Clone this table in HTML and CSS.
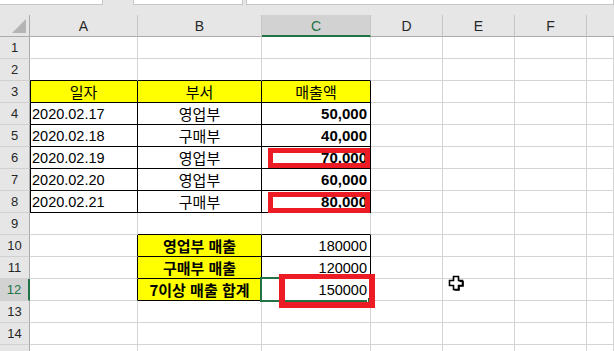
FILE: index.html
```html
<!DOCTYPE html>
<html lang="ko">
<head>
<meta charset="utf-8">
<title>Excel</title>
<link rel="stylesheet" href="styles.css">
</head>
<body>
<div class="topbar">
  <div class="box box1"></div>
  <div class="box box2"></div>
  <div class="box box3"></div>
</div>
<div class="sheet">
  <div class="corner"><span class="tri"></span></div>
  <div class="ch">A</div><div class="ch">B</div><div class="ch sel">C</div><div class="ch">D</div><div class="ch">E</div><div class="ch">F</div><div class="ch last"></div>

  <div class="c rh">1</div><div class="c"></div><div class="c"></div><div class="c"></div><div class="c"></div><div class="c"></div><div class="c"></div><div class="c"></div>
  <div class="c rh">2</div><div class="c bb"></div><div class="c bb"></div><div class="c bb"></div><div class="c"></div><div class="c"></div><div class="c"></div><div class="c"></div>

  <div class="c rh">3</div><div class="c k y bl ctr ko">일자</div><div class="c k y ctr ko">부서</div><div class="c k y ctr ko">매출액</div><div class="c"></div><div class="c"></div><div class="c"></div><div class="c"></div>
  <div class="c rh">4</div><div class="c k bl num">2020.02.17</div><div class="c k ctr ko">영업부</div><div class="c k r num b">50,000</div><div class="c"></div><div class="c"></div><div class="c"></div><div class="c"></div>
  <div class="c rh">5</div><div class="c k bl num">2020.02.18</div><div class="c k ctr ko">구매부</div><div class="c k r num b">40,000</div><div class="c"></div><div class="c"></div><div class="c"></div><div class="c"></div>
  <div class="c rh">6</div><div class="c k bl num">2020.02.19</div><div class="c k ctr ko">영업부</div><div class="c k r num b">70,000</div><div class="c"></div><div class="c"></div><div class="c"></div><div class="c"></div>
  <div class="c rh">7</div><div class="c k bl num">2020.02.20</div><div class="c k ctr ko">영업부</div><div class="c k r num b">60,000</div><div class="c"></div><div class="c"></div><div class="c"></div><div class="c"></div>
  <div class="c rh">8</div><div class="c k bl num">2020.02.21</div><div class="c k ctr ko">구매부</div><div class="c k r num b">80,000</div><div class="c"></div><div class="c"></div><div class="c"></div><div class="c"></div>

  <div class="c rh">9</div><div class="c"></div><div class="c bb"></div><div class="c bb"></div><div class="c"></div><div class="c"></div><div class="c"></div><div class="c"></div>
  <div class="c rh">10</div><div class="c br"></div><div class="c k y ctr ko b">영업부 매출</div><div class="c k r num">180000</div><div class="c"></div><div class="c"></div><div class="c"></div><div class="c"></div>
  <div class="c rh">11</div><div class="c br"></div><div class="c k y ctr ko b">구매부 매출</div><div class="c k r num">120000</div><div class="c"></div><div class="c"></div><div class="c"></div><div class="c"></div>
  <div class="c rh rsel">12</div><div class="c br"></div><div class="c k y ctr ko b">7이상 매출 합계</div><div class="c k r num">150000</div><div class="c"></div><div class="c"></div><div class="c"></div><div class="c"></div>

  <div class="c rh">13</div><div class="c"></div><div class="c"></div><div class="c"></div><div class="c"></div><div class="c"></div><div class="c"></div><div class="c"></div>
  <div class="c rh">14</div><div class="c"></div><div class="c"></div><div class="c"></div><div class="c"></div><div class="c"></div><div class="c"></div><div class="c"></div>
  <div class="c rh"></div><div class="c"></div><div class="c"></div><div class="c"></div><div class="c"></div><div class="c"></div><div class="c"></div><div class="c"></div>
</div>

<div class="selection"><span class="handle"></span></div>
<div class="mark mark6"></div>
<div class="mark mark8"></div>
<div class="mark mark12"></div>

<svg class="cursor" width="16" height="16" viewBox="0 0 16 16">
  <polygon points="5.5,1.5 10.5,1.5 10.5,5.5 14.5,5.5 14.5,10.5 10.5,10.5 10.5,14.5 5.5,14.5 5.5,10.5 1.5,10.5 1.5,5.5 5.5,5.5" fill="#fff" stroke="#000" stroke-width="1.6"/>
  <polyline points="11.5,6.5 15.2,6.5 15.2,11.2 11.2,11.2 11.2,15.2 6.5,15.2" fill="none" stroke="#000" stroke-width="1.2"/>
</svg>
</body>
</html>
```

FILE: styles.css
```css
html, body {
  margin: 0;
  padding: 0;
  background: #fff;
  overflow: hidden;
  width: 614px;
  height: 351px;
}

body {
  position: relative;
  font-family: "Liberation Sans", "Noto Sans CJK KR", sans-serif;
  color: #000;
}

.topbar {
  height: 15px;
  background: #e6e6e6;
  display: flex;
  align-items: flex-start;
}

.box {
  background: #fff;
  border: 1px solid #c6c6c6;
  border-top: none;
  box-sizing: border-box;
  height: 5px;
}

.box1 { width: 103px; border-left: none; }
.box2 { width: 110px; margin-left: 30px; }
.box3 { flex: 1; margin-left: 3px; }

.sheet {
  display: grid;
  grid-template-columns: 30px 108px 124px 109px 72px 72px 72px 1fr;
  grid-template-rows: 22px;
  grid-auto-rows: 22px;
}

.corner {
  background: #e6e6e6;
  border-right: 1px solid #ababab;
  border-bottom: 1px solid #ababab;
  box-sizing: border-box;
  position: relative;
}

.tri {
  position: absolute;
  right: 3px;
  bottom: 3px;
  width: 0;
  height: 0;
  border-left: 14px solid transparent;
  border-bottom: 14px solid #b4b4b4;
}

.ch {
  background: #e6e6e6;
  border-bottom: 1px solid #ababab;
  border-right: 1px solid #c6c6c6;
  box-sizing: border-box;
  display: flex;
  align-items: center;
  justify-content: center;
  font-size: 14px;
  color: #262626;
}

.ch.last { border-right: none; }

.ch.sel {
  background: #d2d2d2;
  border-bottom: 2px solid #217346;
  color: #217346;
  padding-top: 1px;
}

.c {
  box-sizing: border-box;
  border-right: 1px solid #d4d4d4;
  border-bottom: 1px solid #d4d4d4;
  display: flex;
  align-items: center;
  overflow: hidden;
  white-space: nowrap;
  font-size: 14.5px;
}

.rh {
  background: #e6e6e6;
  border-right: 1px solid #ababab;
  border-bottom: 1px solid #d0d0d0;
  justify-content: center;
  font-size: 13px;
  color: #262626;
}

.rh.rsel {
  background: #d2d2d2;
  border-right: 2px solid #217346;
  color: #217346;
}

.k {
  border-right-color: #000;
  border-bottom-color: #000;
}

.bb { border-bottom-color: #000; }
.br { border-right-color: #000; }
.bl { box-shadow: inset 1px 0 0 #000; }

.y { background: #ffff00; }

.ctr { justify-content: center; }
.r { justify-content: flex-end; padding-right: 3px; }

.num { padding-left: 2px; }
.num.r { padding-left: 0; }
.num.b { font-size: 15px; }

.ko {
  font-family: "Noto Sans CJK KR", sans-serif;
  font-size: 15px;
}

.b { font-weight: 700; }

.selection {
  position: absolute;
  left: 260px;
  top: 277px;
  width: 112px;
  height: 25px;
  box-sizing: border-box;
  border: 2px solid #217346;
}

.handle {
  position: absolute;
  right: -4px;
  bottom: -4px;
  width: 5px;
  height: 5px;
  background: #217346;
  border: 1px solid #fff;
}

.mark {
  position: absolute;
  box-sizing: border-box;
  border: 5px solid #ed1c24;
}

.mark6 { left: 268px; top: 148px; width: 102px; height: 20px; }
.mark8 { left: 268px; top: 192px; width: 102px; height: 21px; }
.mark12 { left: 279px; top: 274px; width: 96px; height: 34px; border-width: 5px 6px 6px 6px; }

.cursor {
  position: absolute;
  left: 448px;
  top: 275px;
}
```
